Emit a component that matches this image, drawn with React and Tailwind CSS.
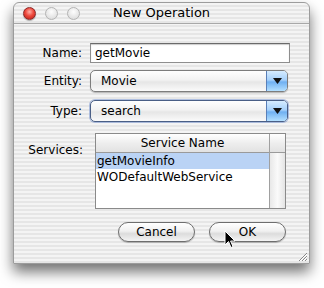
import React from "react";

const stripes =
  "bg-[repeating-linear-gradient(180deg,#f4f4f4_0px,#f4f4f4_2px,#e6e6e6_2px,#e6e6e6_4px)]";

function Light({ red }) {
  return red ? (
    <div className="w-[13px] h-[13px] rounded-full border border-[#8a2a2a] bg-[radial-gradient(circle_at_50%_35%,#ffb0a8_0%,#ee4a3e_45%,#b51a12_100%)] shadow-[0_1px_1px_rgba(0,0,0,0.3)]" />
  ) : (
    <div className="w-[13px] h-[13px] rounded-full border border-[#b4b4b4] bg-[radial-gradient(circle_at_50%_35%,#fdfdfd_0%,#e6e6e6_60%,#d2d2d2_100%)]" />
  );
}

function Popup({ value, focused }) {
  return (
    <div
      className={
        "relative flex h-[22px] w-[198px] items-center rounded-[5px] border bg-[linear-gradient(180deg,#ffffff_0%,#f2f2f2_45%,#e6e6e6_55%,#fafafa_100%)] " +
        (focused
          ? "border-[#4a5f86] shadow-[0_0_0_1px_rgba(120,150,210,0.55)]"
          : "border-[#7d7d7d] shadow-[0_1px_1px_rgba(0,0,0,0.25)]")
      }
    >
      <span className="flex-1 pl-[10px] leading-none">{value}</span>
      <div className="flex h-full w-[21px] items-center justify-center rounded-r-[4px] border-l border-[#5a7fb8] bg-[linear-gradient(180deg,#d6ecff_0%,#a6d0fa_45%,#6fb0f2_55%,#b4e0ff_100%)]">
        <svg width="9" height="6" viewBox="0 0 9 6">
          <path d="M0 0 L9 0 L4.5 6 Z" fill="#111" />
        </svg>
      </div>
    </div>
  );
}

function Button({ children }) {
  return (
    <div className="flex h-[20px] w-[77px] items-center justify-center rounded-full border border-[#6e6e6e] bg-[linear-gradient(180deg,#ffffff_0%,#f0f0f0_45%,#dcdcdc_60%,#f4f4f4_100%)] shadow-[0_1px_1px_rgba(0,0,0,0.25)]">
      {children}
    </div>
  );
}

export default function App() {
  return (
    <div
      className="relative h-[288px] w-[324px] overflow-hidden bg-white pl-[13px] pt-[2px] text-[12px] text-black"
      style={{ fontFamily: '"DejaVu Sans", "Liberation Sans", sans-serif' }}
    >
      <div
        className={
          "relative flex h-[262px] w-[297px] flex-col rounded-t-[6px] border border-[#9c9c9c] shadow-[0_8px_14px_rgba(0,0,0,0.55)] " +
          stripes
        }
      >
        {/* title bar */}
        <div className="grid h-[21px] grid-cols-[1fr_auto_1fr] items-center border-b border-[#a8a8a8]">
          <div className="flex gap-[9px] pl-[9px]">
            <Light red />
            <Light />
            <Light />
          </div>
          <span className="text-[13px]">New Operation</span>
          <div />
        </div>

        {/* form */}
        <div className="mt-[19px] flex flex-col">
          <div className="flex items-center">
            <span className="w-[68px] text-right">Name:</span>
            <div className="ml-[8px] flex h-[20px] w-[200px] items-center border border-[#8e8e8e] border-t-[#6a6a6a] bg-white pl-[4px] shadow-[inset_0_1px_1px_rgba(0,0,0,0.2)]">
              getMovie
            </div>
          </div>

          <div className="mt-[7px] flex items-center">
            <span className="w-[68px] text-right">Entity:</span>
            <div className="ml-[8px]">
              <Popup value="Movie" />
            </div>
          </div>

          <div className="mt-[8px] flex items-center">
            <span className="w-[68px] text-right">Type:</span>
            <div className="ml-[8px]">
              <Popup value="search" focused />
            </div>
          </div>

          <div className="mt-[11px] flex items-start">
            <span className="w-[69px] pt-[8px] text-right">Services:</span>
            <div className="ml-[12px] flex h-[76px] w-[191px] border border-[#8a8a8a] bg-white">
              <div className="flex flex-1 flex-col">
                <div className="flex h-[19px] items-center justify-center border-b border-[#9a9a9a] bg-[linear-gradient(180deg,#ffffff_0%,#eeeeee_50%,#e2e2e2_100%)]">
                  Service Name
                </div>
                <div className="flex h-[16px] items-center bg-[#bad3f5] pl-[1px]">
                  getMovieInfo
                </div>
                <div className="flex h-[16px] items-center pl-[1px]">
                  WODefaultWebService
                </div>
              </div>
              <div className="flex w-[16px] flex-col border-l border-[#a0a0a0]">
                <div className="h-[19px] border-b border-[#9a9a9a] bg-[linear-gradient(180deg,#ffffff_0%,#eeeeee_50%,#e2e2e2_100%)]" />
                <div className="flex-1 bg-[linear-gradient(90deg,#e8e8e8_0%,#fafafa_50%,#e4e4e4_100%)]" />
              </div>
            </div>
          </div>

          <div className="mt-[13px] flex justify-end gap-[14px] pr-[23px]">
            <Button>Cancel</Button>
            <Button>OK</Button>
          </div>
        </div>

        {/* resize grip */}
        <svg
          className="absolute bottom-[1px] right-[1px]"
          width="12"
          height="12"
          viewBox="0 0 12 12"
        >
          <path d="M11 3 L3 11 M11 6 L6 11 M11 9 L9 11" stroke="#888" strokeWidth="1" />
          <path d="M11 4 L4 11 M11 7 L7 11" stroke="#fff" strokeWidth="1" />
        </svg>
      </div>

      {/* mouse cursor */}
      <svg
        className="absolute left-[224px] top-[230px]"
        width="12"
        height="19"
        viewBox="0 0 12 19"
      >
        <path
          d="M1 1 L1 15 L4.5 11.5 L7 17.5 L9 16.6 L6.6 11 L11 11 Z"
          fill="#000"
          stroke="#fff"
          strokeWidth="1"
        />
      </svg>
    </div>
  );
}
